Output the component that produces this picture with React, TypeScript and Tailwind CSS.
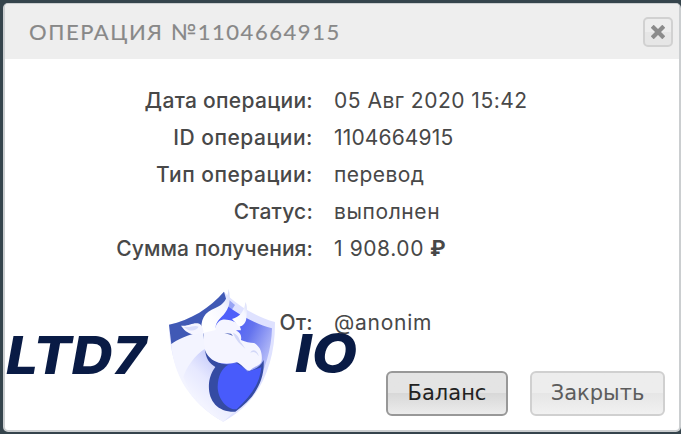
import { type ReactElement } from 'react';

interface DetailRow {
    readonly label: string;
    readonly value: string;
    readonly labelClass: string;
    readonly valueClass: string;
    readonly currency?: boolean;
}

const ROWS: readonly DetailRow[] = [
    { label: 'Дата операции:', value: '05 Авг 2020 15:42', labelClass: 'tracking-[0.3px]', valueClass: 'tracking-[0.5px]' },
    { label: 'ID операции:', value: '1104664915', labelClass: 'tracking-[0.5px]', valueClass: 'tracking-[0.15px]' },
    { label: 'Тип операции:', value: 'перевод', labelClass: 'tracking-[0.5px]', valueClass: 'tracking-[0.45px]' },
    { label: 'Статус:', value: 'выполнен', labelClass: 'tracking-[0.2px]', valueClass: 'tracking-[0.6px]' },
    { label: 'Сумма получения:', value: '1 908.00', labelClass: 'tracking-[0.1px]', valueClass: 'tracking-[0.6px]', currency: true },
];

export default function App(): ReactElement {
    return (
        <div className="relative h-[434px] w-[681px] overflow-hidden bg-[#35444c] pt-[3px] pl-[3px] font-['Inter',sans-serif] text-[#484848]">
            <div className="flex h-[429px] w-[678px] flex-col overflow-hidden rounded-[5px] border-2 border-t border-[#cbced0] bg-white">
                <Header />
                <div className="flex flex-1 flex-col pt-[23px]">
                    {ROWS.map((row) => (
                        <Detail key={row.label} {...row} />
                    ))}
                    <div className="h-[37px]" />
                    <Detail label="От:" value="@anonim" labelClass="tracking-[0.3px]" valueClass="tracking-[0.75px]" />
                </div>
                <Footer />
            </div>
            <Watermark />
        </div>
    );
}

function Header(): ReactElement {
    return (
        <header className="flex h-[55px] shrink-0 items-center justify-between bg-[#eeeeee] pr-[6px] pl-[24px]">
            <h1 className="font-['Lato',sans-serif] text-[22px] leading-none tracking-[1.55px] text-[#888888] [-webkit-text-stroke:0.15px_#888888]">
                ОПЕРАЦИЯ №1104664915
            </h1>
            <button
                type="button"
                aria-label="Закрыть окно"
                className="flex size-[30px] items-center justify-center rounded-[5px] border-2 border-[#d1d1d1] bg-linear-to-b from-[#ededed] from-50% to-[#e6e6e6] to-50%"
            >
                <svg className="size-[14px]" viewBox="0 0 14 14" aria-hidden="true">
                    <path d="M2.7 2.7 11.3 11.3M11.3 2.7 2.7 11.3" stroke="#8b8b8b" strokeWidth="4.2" strokeLinecap="square" />
                </svg>
            </button>
        </header>
    );
}

function Detail({ label, value, labelClass, valueClass, currency = false }: DetailRow): ReactElement {
    return (
        <div className="flex h-[37px] shrink-0 items-center text-[21px] leading-none whitespace-nowrap">
            <div className="flex w-[308px] shrink-0 justify-end font-medium">
                <span className={labelClass}>{label}</span>
            </div>
            <div className="flex items-center pl-[21px]">
                <span className={valueClass}>{value}</span>
                {currency ? <span className="ml-[6px] font-bold">₽</span> : null}
            </div>
        </div>
    );
}

function Footer(): ReactElement {
    return (
        <footer className="flex shrink-0 justify-end gap-[22px] pr-[14px] pb-[14px] font-['DejaVu_Sans',sans-serif] text-[21px] leading-none">
            <button
                type="button"
                className="h-[45px] w-[122px] rounded-[6px] border-2 border-[#989898] bg-linear-to-b from-[#e4e4e4] from-50% via-[#d8d8d8] via-50% to-[#ececec] text-[#222222]"
            >
                Баланс
            </button>
            <button
                type="button"
                className="h-[45px] w-[135px] rounded-[6px] border-2 border-[#d0d0d0] bg-linear-to-b from-[#ededed] from-50% via-[#e6e6e6] via-50% to-[#f1f1f1] text-[#5c5c5c]"
            >
                Закрыть
            </button>
        </footer>
    );
}

// Brand mark laid over the dialog: wordmark on both sides of the shield.
function Watermark(): ReactElement {
    return (
        <svg
            className="pointer-events-none absolute top-[280px] left-0 h-[154px] w-[370px]"
            viewBox="0 0 370 154"
            aria-hidden="true"
        >
            <defs>
                <linearGradient id="right" gradientUnits="userSpaceOnUse" x1="225" y1="130" x2="345" y2="185">
                    <stop offset="0" stopColor="#4f60fa" />
                    <stop offset="0.4" stopColor="#6473ee" />
                    <stop offset="1" stopColor="#b3baf8" />
                </linearGradient>
                <linearGradient id="neck" x1="0.8" y1="0" x2="0.3" y2="0.75">
                    <stop offset="0" stopColor="#b5bcf8" />
                    <stop offset="0.6" stopColor="#e6e8ff" />
                    <stop offset="1" stopColor="#f4f5ff" />
                </linearGradient>
                <linearGradient id="horn" x1="1" y1="0" x2="0.2" y2="0.7">
                    <stop offset="0" stopColor="#d3d8f8" />
                    <stop offset="0.4" stopColor="#f5f6ff" />
                    <stop offset="1" stopColor="#ffffff" />
                </linearGradient>
            </defs>

            <g className="font-['Inter',sans-serif] italic" fontSize="52" fontWeight="800" fill="#091b45">
                <text x="6" y="94" textLength="140" lengthAdjust="spacingAndGlyphs">LTD7</text>
                <text x="295" y="92" textLength="62" lengthAdjust="spacingAndGlyphs">IO</text>
            </g>

            <g transform="translate(160 0) scale(0.33333)">
                <path d="M192 35C226 72 285 109 345 126C346 266 291 372 190 425C91 371 29 271 27 134C91 121 151 83 192 35Z" fill="#dfe2ff" />
                <path d="M192 35C151 83 91 121 27 134L34 192L136 195L205 80Z" fill="#4059b5" />
                <path d="M205 58L225 75L205 105Z" fill="#98a4f4" />
                <path d="M202 78C240 106 287 132 336 145C334 238 292 337 226 393L145 240L135 200L160 130Z" fill="url(#right)" />
                <path d="M34 192C49 181 86 160 130 156L135 211C146 241 173 253 193 258C140 300 139 356 181 384L205 404L190 425C91 371 40 285 34 192Z" fill="#f3f4ff" />
                <path d="M134 207C105 225 80 260 70 291C87 340 132 388 190 425L222 396C155 383 144 313 169 262Z" fill="url(#neck)" />
                <path d="M135 205C151 255 204 260 237 248L262 275C282 269 300 262 311 240C315 309 278 358 226 395C171 397 143 360 147 310C149 288 158 272 166 261C149 251 136 236 135 205Z" fill="#354ba3" />
                <path d="M205 254C231 244 242 255 263 275L304 262C300 312 270 351 230 388C201 390 173 356 173 320C174 287 185 265 205 254Z" fill="#485bfb" />
                <path d="M123 143L166 143C172 122 186 115 206 120C228 124 242 136 243 151L228 151C243 160 245 169 243 180C257 185 270 189 282 189C299 198 308 216 305 242C303 257 281 259 272 270C259 276 258 263 231 246C202 256 164 252 145 228C131 211 131 193 132 165Z" fill="#f5f5ff" />
                <path d="M126 160C119 118 134 96 166 84C192 73 202 57 206 27C214 62 207 86 191 104C171 124 166 130 167 150Z" fill="url(#horn)" />
                <path d="M216 117C240 109 251 97 257 66C264 88 260 102 259 115C258 127 250 139 238 140Z" fill="url(#horn)" />
                <path d="M63 137C87 140 97 126 118 131C126 135 129 144 131 157C103 169 82 164 63 137Z" fill="#f5f5ff" />
                <path d="M71 140C89 145 101 134 116 140C107 154 89 157 71 140Z" fill="#d9ddfb" />
                <path d="M193 159L213 161L219 168L211 164Z" fill="#4259b4" />
                <path d="M219 158C240 167 237 183 245 190L256 206C240 191 229 184 219 158ZM271 218C281 201 296 219 296 229C288 215 281 214 271 218Z" fill="#d3d8f8" />
            </g>
        </svg>
    );
}
